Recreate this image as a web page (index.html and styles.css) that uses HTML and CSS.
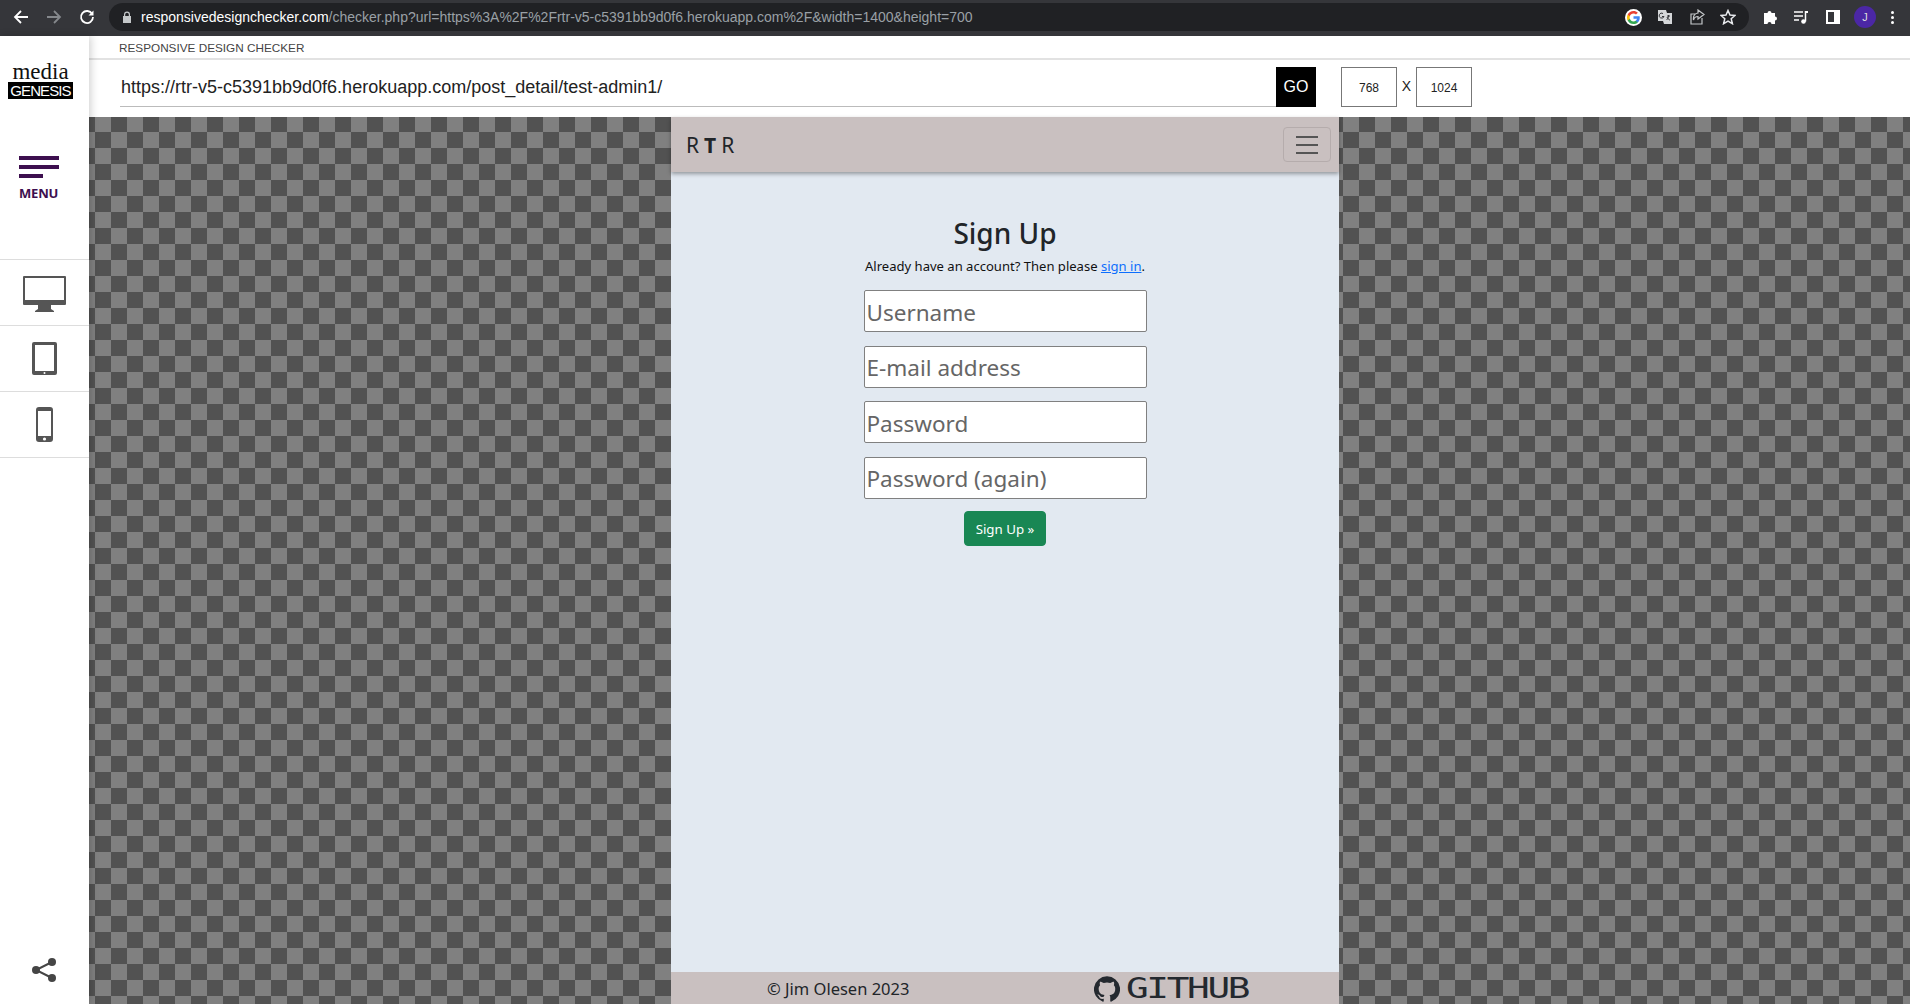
FILE: index.html
```html
<!DOCTYPE html>
<html lang="en">
<head>
    <meta charset="UTF-8">
    <title>Responsive Design Checker</title>
    <link rel="stylesheet" href="styles.css">
</head>
<body>
    <div class="browser-bar">
        <svg class="nav-icon first" viewBox="0 0 16 16"><path d="M15 8H2M8 2L2 8l6 6" fill="none" stroke="#fff" stroke-width="1.8"/></svg>
        <svg class="nav-icon dim" viewBox="0 0 16 16"><path d="M1 8h13M8 2l6 6-6 6" fill="none" stroke="#85888c" stroke-width="1.8"/></svg>
        <svg class="nav-icon" viewBox="0 0 16 16"><path d="M13.2 5A6 6 0 1 0 14 8" fill="none" stroke="#fff" stroke-width="1.8"/><path d="M14.5 1.5v5h-5z" fill="#fff"/></svg>
        <div class="omnibox">
            <svg class="lock" viewBox="0 0 10 12"><path d="M2 5V3.5a3 3 0 0 1 6 0V5h1v7H1V5zm1.2 0h3.6V3.5a1.8 1.8 0 0 0-3.6 0z" fill="#c4c7c9"/></svg>
            <span class="address"><b>responsivedesignchecker.com</b>/checker.php?url=https%3A%2F%2Frtr-v5-c5391bb9d0f6.herokuapp.com%2F&amp;width=1400&amp;height=700</span>
            <span class="google">
                <svg viewBox="0 0 18 18">
                    <path d="M17.64 9.2c0-.64-.06-1.25-.16-1.84H9v3.48h4.84a4.14 4.14 0 0 1-1.8 2.72v2.26h2.92c1.7-1.57 2.68-3.88 2.68-6.62z" fill="#4285f4"/>
                    <path d="M9 18c2.43 0 4.47-.8 5.96-2.18l-2.92-2.26c-.8.54-1.83.86-3.04.86-2.34 0-4.33-1.58-5.04-3.7H.96v2.34A9 9 0 0 0 9 18z" fill="#34a853"/>
                    <path d="M3.96 10.72A5.4 5.4 0 0 1 3.68 9c0-.6.1-1.18.28-1.72V4.94H.96A9 9 0 0 0 0 9c0 1.45.35 2.82.96 4.06l3-2.34z" fill="#fbbc05"/>
                    <path d="M9 3.58c1.32 0 2.5.45 3.44 1.35l2.58-2.59C13.46.89 11.43 0 9 0A9 9 0 0 0 .96 4.94l3 2.34C4.67 5.16 6.66 3.58 9 3.58z" fill="#ea4335"/>
                </svg>
            </span>
            <svg class="bar-icon translate" viewBox="0 0 16 16"><path d="M1 1h8l1 3h5v11H7l-1-3H1z" fill="#d5d7d9"/><path d="M6 4.5a2.5 2.5 0 1 0 1 3H5M10 7h3M11.5 6v1c0 2-1 3-2 4m.5-3c.5 1.5 2 3 3 3" fill="none" stroke="#35363a" stroke-width="1"/></svg>
            <svg class="bar-icon share" viewBox="0 0 16 16"><path d="M13 9v6H2V5h4" fill="none" stroke="#c4c7c9" stroke-width="1.2"/><path d="M9 1l6 4.500-6 4.500V7.500C6 7.500 5 9 4.500 11c-.5-4 1-6.500 4.500-7z" fill="none" stroke="#c4c7c9" stroke-width="1.2"/></svg>
            <svg class="bar-icon star" viewBox="0 0 16 16"><path d="M8 1.500l2 4.600 5 .4-3.800 3.300 1.200 4.900L8 12.100l-4.400 2.600 1.200-4.900L1 6.500l5-.4z" fill="none" stroke="#e8eaed" stroke-width="1.500"/></svg>
        </div>
        <svg class="bar-icon puzzle" viewBox="0 0 16 16"><path d="M1 5h3.500a2 2 0 1 1 4 0H12v3.500a2 2 0 1 1 0 4V16H8.500a2 2 0 1 0-4 0H1z" fill="#fff" transform="translate(1 -1)"/></svg>
        <svg class="bar-icon media" viewBox="0 0 16 16"><path d="M1 3h9M1 7h9M1 11h5" stroke="#fff" stroke-width="1.500"/><path d="M12.500 2v10.500" stroke="#fff" stroke-width="1.500"/><circle cx="10.500" cy="12.500" r="2.300" fill="#fff"/><path d="M12 2h3v2h-3z" fill="#fff"/></svg>
        <span class="side-toggle"></span>
        <span class="avatar">J</span>
        <span class="kebab"><i></i><i></i><i></i></span>
    </div>

    <div class="app">
        <aside class="sidebar">
            <div class="logo">
                <div class="logo-media">media</div>
                <div class="logo-genesis">GENESIS</div>
            </div>
            <div class="menu">
                <i class="menu-line"></i>
                <i class="menu-line"></i>
                <i class="menu-line short"></i>
                <span>MENU</span>
            </div>
            <div class="device">
                <svg class="monitor" width="43" height="36" viewBox="0 0 43 36"><path d="M1 0h41a1 1 0 0 1 1 1v27a1 1 0 0 1-1 1H28v4l3 2v1H12v-1l3-2v-4H1a1 1 0 0 1-1-1V1a1 1 0 0 1 1-1zm1 2v22h39V2z" fill="#555"/></svg>
            </div>
            <div class="device">
                <svg width="25" height="33" viewBox="0 0 25 33"><path d="M2 0h21a2 2 0 0 1 2 2v29a2 2 0 0 1-2 2H2a2 2 0 0 1-2-2V2a2 2 0 0 1 2-2zm1 3v26h19V3z" fill="#555"/><circle cx="12.500" cy="31" r="1" fill="#fff"/></svg>
            </div>
            <div class="device">
                <svg width="17" height="35" viewBox="0 0 17 35"><path d="M3 0h11a3 3 0 0 1 3 3v29a3 3 0 0 1-3 3H3a3 3 0 0 1-3-3V3a3 3 0 0 1 3-3zm-1 4v25h13V4z" fill="#555"/><circle cx="8.500" cy="32" r="1.600" fill="#fff"/></svg>
            </div>
            <svg class="share-link" width="24" height="24" viewBox="0 0 24 24">
                <path d="M20 4L4 12l16 8" fill="none" stroke="#454545" stroke-width="2"/>
                <circle cx="20" cy="4" r="4" fill="#454545"/>
                <circle cx="4" cy="12" r="4" fill="#454545"/>
                <circle cx="20" cy="20" r="4" fill="#454545"/>
            </svg>
        </aside>

        <main class="checker">
            <header class="checker-head">
                <div class="checker-title">RESPONSIVE DESIGN CHECKER</div>
                <div class="checker-controls">
                    <div class="url-field">https://rtr-v5-c5391bb9d0f6.herokuapp.com/post_detail/test-admin1/</div>
                    <button class="go-btn" type="button">GO</button>
                    <div class="size-box">768</div>
                    <span class="size-x">X</span>
                    <div class="size-box">1024</div>
                </div>
            </header>

            <div class="stage">
                <div class="site">
                    <nav class="site-nav">
                        <a class="brand" href="#">R<b>T</b>R</a>
                        <button class="toggler" type="button"><i></i><i></i><i></i></button>
                    </nav>
                    <section class="signup">
                        <h1>Sign Up</h1>
                        <p>Already have an account? Then please <a href="#">sign in</a>.</p>
                        <form class="signup-form">
                            <input type="text" placeholder="Username">
                            <input type="text" placeholder="E-mail address">
                            <input type="text" placeholder="Password">
                            <input type="text" placeholder="Password (again)">
                            <button class="signup-btn" type="button">Sign Up »</button>
                        </form>
                    </section>
                    <footer class="site-footer">
                        <span class="copy">© Jim Olesen 2023</span>
                        <a class="github" href="#">
                            <svg width="26" height="26" viewBox="0 0 24 24"><path d="M12 .3a12 12 0 0 0-3.800 23.400c.6.1.8-.3.8-.6v-2c-3.300.7-4-1.600-4-1.600-.6-1.400-1.400-1.800-1.400-1.800-1-.7.1-.7.1-.7 1.200.1 1.800 1.200 1.800 1.200 1 1.800 2.800 1.300 3.500 1 .1-.8.4-1.300.8-1.600-2.700-.3-5.500-1.300-5.500-6 0-1.200.5-2.300 1.300-3.100-.2-.4-.6-1.600 0-3.200 0 0 1-.3 3.400 1.200a11.500 11.500 0 0 1 6 0c2.300-1.500 3.300-1.200 3.300-1.200.6 1.600.2 2.800 0 3.200.9.8 1.300 1.900 1.300 3.200 0 4.600-2.800 5.600-5.500 5.900.5.4.9 1 .9 2.200v3.300c0 .3.1.7.8.6A12 12 0 0 0 12 .3z" fill="#24292f"/></svg>
                            <span>GITHUB</span>
                        </a>
                    </footer>
                </div>
            </div>
        </main>
    </div>
</body>
</html>
```

FILE: styles.css
```css
* {
    box-sizing: border-box;
}
html, body {
    height: 100%;
}
body {
    margin: 0;
    display: flex;
    flex-direction: column;
    overflow: hidden;
    font-family: "Liberation Sans", Arial, sans-serif;
    background: #fff;
}

/* browser toolbar */
.browser-bar {
    height: 36px;
    flex: none;
    display: flex;
    align-items: center;
    background: #35363a;
    padding: 0 9px 2px 0;
}
.nav-icon {
    width: 16px;
    height: 16px;
    margin-right: 17px;
}
.nav-icon.first {
    margin-left: 13px;
}
.omnibox {
    width: 1640px;
    height: 28px;
    margin-left: -3px;
    display: flex;
    align-items: center;
    background: #202124;
    border-radius: 14px;
    padding-left: 13px;
}
.lock {
    width: 10px;
    height: 12px;
    margin-right: 9px;
    flex: none;
}
.address {
    width: 1484px;
    flex: none;
    color: #9aa0a6;
    font-size: 14px;
    white-space: nowrap;
    overflow: hidden;
}
.address b {
    color: #fff;
    font-weight: 400;
}
.google {
    width: 17px;
    height: 17px;
    flex: none;
    background: #fff;
    border-radius: 50%;
    padding: 2px;
    display: flex;
}
.bar-icon {
    width: 16px;
    height: 16px;
    flex: none;
}
.translate {
    margin-left: 15px;
}
.share {
    margin-left: 16px;
}
.star {
    margin-left: 15px;
}
.puzzle {
    margin-left: 13px;
}
.media {
    margin-left: 15px;
}
.side-toggle {
    width: 14px;
    height: 14px;
    margin-left: 17px;
    border: 2px solid #fff;
    border-right-width: 6px;
    flex: none;
}
.avatar {
    width: 22px;
    height: 22px;
    margin-left: 14px;
    flex: none;
    border-radius: 50%;
    background: #4b27a5;
    color: #ddd;
    font-size: 11px;
    display: flex;
    align-items: center;
    justify-content: center;
}
.kebab {
    margin-left: 15px;
    display: flex;
    flex-direction: column;
    gap: 2px;
}
.kebab i {
    width: 3px;
    height: 3px;
    background: #fff;
    border-radius: 50%;
}

/* page */
.app {
    flex: 1;
    min-height: 0;
    display: flex;
}
.sidebar {
    width: 89px;
    flex: none;
    display: flex;
    flex-direction: column;
    position: relative;
    z-index: 1;
    background: #fff;
    box-shadow: 2px 0 8px rgba(0, 0, 0, 0.18);
}
.logo {
    height: 62px;
    padding: 29px 0 0 8px;
}
.logo-media {
    width: 65px;
    margin-top: -3px;
    text-align: center;
    font-family: "Liberation Serif", serif;
    font-size: 23px;
    line-height: 19px;
    color: #111;
}
.logo-genesis {
    width: 65px;
    height: 17px;
    margin-top: 1px;
    background: #000;
    color: #fff;
    font-size: 15px;
    line-height: 17px;
    text-align: center;
    letter-spacing: -0.900px;
}
.menu {
    height: 162px;
    padding: 58px 0 0 19px;
    display: flex;
    flex-direction: column;
    border-bottom: 1px solid #ddd;
}
.menu-line {
    width: 40px;
    height: 4px;
    margin-bottom: 5px;
    background: #3d0f4f;
}
.menu-line.short {
    width: 24px;
    margin-bottom: 6px;
}
.menu span {
    color: #3d0f4f;
    font-family: "Open Sans", sans-serif;
    font-size: 13px;
    font-weight: 700;
    line-height: 18px;
    letter-spacing: -0.200px;
}
.device {
    height: 66px;
    display: flex;
    align-items: center;
    justify-content: center;
    border-bottom: 1px solid #ddd;
}
.monitor {
    margin-top: 3px;
}
.share-link {
    margin: auto 0 22px 32px;
}

.checker {
    flex: 1;
    min-width: 0;
    display: flex;
    flex-direction: column;
}
.checker-head {
    height: 81px;
    flex: none;
    background: #fff;
}
.checker-title {
    height: 24px;
    padding: 5px 0 0 30px;
    border-bottom: 2px solid #e2e2e2;
    color: #444;
    font-size: 11.750px;
    line-height: 14px;
}
.checker-controls {
    height: 47px;
    padding: 7px 0 0 31px;
    display: flex;
    align-items: flex-start;
}
.url-field {
    width: 1156px;
    height: 40px;
    padding: 0 0 0 1px;
    border-bottom: 1px solid #bbb;
    color: #222;
    font-size: 18px;
    line-height: 41px;
}
.go-btn {
    width: 40px;
    height: 40px;
    padding: 0;
    border: none;
    background: #000;
    color: #fff;
    font-family: inherit;
    font-size: 16px;
}
.size-box {
    height: 40px;
    width: 56px;
    margin-left: 25px;
    border: 1px solid #777;
    color: #222;
    font-size: 12px;
    line-height: 40px;
    text-align: center;
}
.size-x {
    width: 19px;
    margin-right: -25px;
    color: #222;
    font-size: 14px;
    line-height: 38px;
    text-align: center;
}

/* the site inside the checker */
.stage {
    flex: 1;
    min-height: 0;
    padding-left: 582px;
    background: repeating-conic-gradient(#808080 0 25%, #525252 0 50%) -10px -1px / 32px 32px;
}
.site {
    width: 668px;
    height: 100%;
    display: flex;
    flex-direction: column;
    background: #e2e9f1;
    font-family: "Noto Sans", sans-serif;
    color: #212529;
}
.site-nav {
    height: 55px;
    flex: none;
    padding: 0 8px 0 15px;
    display: flex;
    align-items: center;
    justify-content: space-between;
    background: #c9c0c0;
    box-shadow: 0 2px 4px rgba(0, 0, 0, 0.35);
}
.brand {
    color: #212529;
    font-size: 21px;
    letter-spacing: 5px;
    text-decoration: none;
}
.brand b {
    font-weight: 700;
}
.toggler {
    width: 48px;
    height: 35px;
    padding: 0 12px;
    display: flex;
    flex-direction: column;
    justify-content: center;
    gap: 6px;
    background: transparent;
    border: 1px solid #b5acac;
    border-radius: 4px;
}
.toggler i {
    height: 2px;
    background: #555;
}
.signup {
    flex: 1;
    min-height: 0;
    padding-top: 42px;
    display: flex;
    flex-direction: column;
    align-items: center;
    text-align: center;
}
.signup h1 {
    margin: 0;
    font-size: 28px;
    font-weight: 500;
    line-height: 38px;
}
.signup p {
    margin: 4px 0 0;
    font-size: 13.050px;
    line-height: 20px;
    color: #111;
}
.signup p a {
    color: #0d6efd;
}
.signup-form {
    margin-top: 14px;
    display: flex;
    flex-direction: column;
    align-items: center;
}
.signup-form input {
    width: 283px;
    height: 42px;
    margin-bottom: 13.500px;
    padding: 2px 2px 0;
    background: #fff;
    border: 1px solid #808080;
    border-radius: 2px;
    font-family: inherit;
    font-size: 22.500px;
}
.signup-form input::placeholder {
    color: #666;
    opacity: 1;
}
.signup-btn {
    width: 82px;
    height: 35px;
    margin-top: -1px;
    padding: 0;
    background: #198754;
    border: 1px solid #198754;
    border-radius: 4px;
    color: #fff;
    font-family: inherit;
    font-size: 13.300px;
}
.site-footer {
    height: 32px;
    flex: none;
    display: flex;
    align-items: flex-start;
    background: #c9c0c0;
}
.copy {
    margin: 6px 0 0 96px;
    font-size: 16.500px;
    line-height: 22px;
    width: 327px;
}
.github {
    display: flex;
    align-items: center;
    gap: 6px;
    margin-top: 4px;
    color: #24292f;
    text-decoration: none;
}
.github span {
    display: inline-block;
    margin-top: -2px;
    font-family: "DejaVu Sans Mono", monospace;
    font-size: 29px;
    line-height: 24px;
    letter-spacing: -1.800px;
    transform: scaleX(1.300);
    transform-origin: left center;
}
```
